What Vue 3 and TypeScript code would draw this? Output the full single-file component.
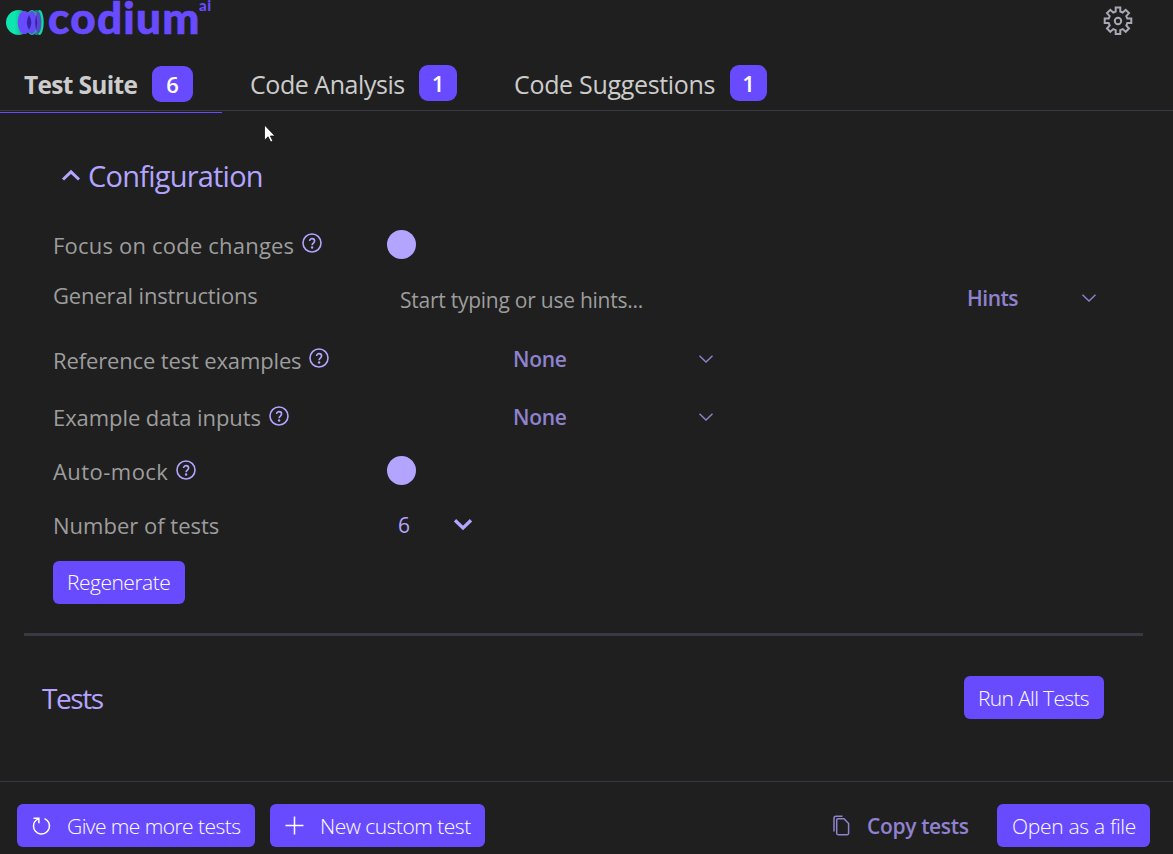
<script setup lang="ts">
import { ref } from 'vue'

interface Tab {
  id: string
  label: string
  count: number
}

const tabs: Tab[] = [
  { id: 'suite', label: 'Test Suite', count: 6 },
  { id: 'analysis', label: 'Code Analysis', count: 1 },
  { id: 'suggestions', label: 'Code Suggestions', count: 1 },
]
const active = ref('suite')
const testCount = ref(6)
const help =
  'M10 1a9 9 0 1 0 0 18a9 9 0 0 0 0-18M7.6 8.1c0-3.3 5-3.2 5 0c0 1.900-2.500 2-2.500 4.100'
</script>

<template>
  <div class="app">
    <header class="top">
      <div class="brand">
        <svg class="mark" width="40" height="28" viewBox="0 0 40 28">
          <defs>
            <linearGradient id="fade">
              <stop offset="0.35" stop-color="#0ee6b0" />
              <stop offset="1" stop-color="#22776f" />
            </linearGradient>
          </defs>
          <ellipse cx="33.500" cy="14.500" rx="4.200" ry="12.500" fill="#12d6ad" />
          <ellipse cx="30.500" cy="14.500" rx="5" ry="12.500" fill="#277f86" />
          <ellipse cx="26" cy="14.500" rx="6.500" ry="12.500" fill="#1cb3a0" />
          <circle cx="12.500" cy="14.500" r="12.500" fill="url(#fade)" />
          <ellipse cx="32.200" cy="14.500" rx="2.700" ry="10.500" fill="#5947d0" />
          <ellipse cx="25.800" cy="14.500" rx="5" ry="11.500" fill="#6549f2" />
          <ellipse cx="18.500" cy="14.500" rx="6.800" ry="11.500" fill="#694bff" />
          <path d="M23 7q4.600 7.500 0 15q-4.200-7.500 0-15M30.300 7q1.600 7.500 0 15q-2.200-7.500 0-15" fill="#3521a8" />
        </svg>
        <span class="word">codium</span>
        <span class="ai">ai</span>
      </div>
      <svg class="gear" width="30" height="30" viewBox="0 0 30 30">
        <path d="M12.700 5.500V1.500h4.600v4l2.400 1l3-2.700l3.300 3.300l-2.700 3l1 2.400h4v4.600h-4l-1 2.400l2.700 3l-3.300 3.300l-3-2.700l-2.400 1v4h-4.600v-4l-2.400-1l-3 2.700l-3.300-3.300l2.700-3l-1-2.400h-4v-4.600h4l1-2.400l-2.700-3l3.300-3.300l3 2.700z" />
        <circle cx="15" cy="15" r="3.200" />
      </svg>
    </header>

    <nav class="tabs">
      <button
        v-for="tab in tabs"
        :key="tab.id"
        :class="['tab', tab.id, { active: active === tab.id }]"
        @click="active = tab.id"
      >
        <span class="tab-label">{{ tab.label }}</span>
        <span class="badge">{{ tab.count }}</span>
      </button>
    </nav>

    <main class="content">
      <h2 class="config-title">
        <svg width="20" height="14" viewBox="0 0 20 14"><path class="bold" d="M2 11.500L10 3.800l8 7.700" /></svg>
        <span>Configuration</span>
      </h2>

      <div class="row r-focus">
        <div class="label">
          <span class="t-focus">Focus on code changes</span>
          <svg class="help" width="20" height="20" viewBox="0 0 20 20"><path :d="help" /><circle class="dot" cx="10.100" cy="14.500" r="1.200" /></svg>
        </div>
        <span class="knob"></span>
      </div>

      <div class="row r-general">
        <div class="label"><span class="t-general">General instructions</span></div>
        <div class="prompt">Start typing or use hints...</div>
        <div class="select hints">
          <span>Hints</span>
          <svg width="16" height="10" viewBox="0 0 16 10"><path class="thin" d="M1.500 1.800L8 8l6.500-6.200" /></svg>
        </div>
      </div>

      <div class="row r-ref">
        <div class="label">
          <span class="t-ref">Reference test examples</span>
          <svg class="help" width="20" height="20" viewBox="0 0 20 20"><path :d="help" /><circle class="dot" cx="10.100" cy="14.500" r="1.200" /></svg>
        </div>
        <div class="select none">
          <span>None</span>
          <svg width="16" height="10" viewBox="0 0 16 10"><path class="thin" d="M1.500 1.800L8 8l6.500-6.200" /></svg>
        </div>
      </div>

      <div class="row r-data">
        <div class="label">
          <span class="t-data">Example data inputs</span>
          <svg class="help" width="20" height="20" viewBox="0 0 20 20"><path :d="help" /><circle class="dot" cx="10.100" cy="14.500" r="1.200" /></svg>
        </div>
        <div class="select none">
          <span>None</span>
          <svg width="16" height="10" viewBox="0 0 16 10"><path class="thin" d="M1.500 1.800L8 8l6.500-6.200" /></svg>
        </div>
      </div>

      <div class="row r-mock">
        <div class="label">
          <span class="t-mock">Auto-mock</span>
          <svg class="help" width="20" height="20" viewBox="0 0 20 20"><path :d="help" /><circle class="dot" cx="10.100" cy="14.500" r="1.200" /></svg>
        </div>
        <span class="knob"></span>
      </div>

      <div class="row r-count">
        <div class="label"><span class="t-count">Number of tests</span></div>
        <div class="number">
          <span>{{ testCount }}</span>
          <svg width="20" height="14" viewBox="0 0 20 14"><path class="bolder" d="M2 2.300l8 7.700l8-7.700" /></svg>
        </div>
      </div>

      <button class="btn regen"><span>Regenerate</span></button>

      <hr class="rule" />

      <section class="tests">
        <h2>Tests</h2>
        <button class="btn run"><span>Run All Tests</span></button>
      </section>
    </main>

    <footer class="bottom">
      <button class="btn more">
        <svg width="20" height="20" viewBox="0 0 20 20"><path d="M2.500 2.300h5.400v5M7.700 2.600C4.300 4 2.500 6.800 2.500 10a8 8 0 1 0 11-7.400" /></svg>
        <span>Give me more tests</span>
      </button>
      <button class="btn custom">
        <svg width="20" height="20" viewBox="0 0 20 20"><path d="M10.500 .5v18M1.500 9.500h18" /></svg>
        <span>New custom test</span>
      </button>
      <button class="copy">
        <svg width="18" height="21" viewBox="0 0 18 21"><path d="M2 16.500V3.200q0-2 2-2H10.500M4.700 5q0-1.200 1.200-1.200h6.100l4.600 4.800v9.700q0 1.400-1.400 1.400H6.100q-1.400 0-1.400-1.400z" /></svg>
        <span>Copy tests</span>
      </button>
      <button class="btn open"><span>Open as a file</span></button>
    </footer>

    <svg class="cursor" width="14" height="20" viewBox="0 0 14 20">
      <path d="M1.500 1v15.200l3.600-3.400l2.600 5.300l2.200-1l-2.500-5.100h4.600z" />
    </svg>
  </div>
</template>

<style>
body {
  background: #1f1f1f;
}
</style>

<style scoped>
.app {
  position: relative;
  box-sizing: border-box;
  width: 1173px;
  height: 854px;
  overflow: hidden;
  display: flex;
  flex-direction: column;
  background: #1f1f1f;
  color: #9d9d9d;
  font-family: 'Open Sans', 'Noto Sans', sans-serif;
  font-size: 22px;
}
svg {
  display: block;
  flex: none;
  fill: none;
}
button {
  font: inherit;
  color: inherit;
  border: 0;
  background: none;
  padding: 0;
  white-space: nowrap;
}
.top {
  height: 56px;
  flex: none;
  display: flex;
  justify-content: space-between;
  padding: 0 40px 0 6px;
}
.brand {
  display: flex;
  color: #694bff;
  white-space: nowrap;
}
.mark {
  margin-top: 8px;
}
.word {
  font: 900 44px/35px Lato, sans-serif;
  letter-spacing: 1.300px;
  -webkit-text-stroke: 0.700px #694bff;
  width: 152px;
  margin-left: 2px;
}
.ai {
  font: 900 15px/10px Lato, sans-serif;
  letter-spacing: 0.500px;
  margin-left: -1px;
}
.gear {
  margin-top: 6px;
  stroke: #a9a7b3;
  stroke-width: 2;
}
.tabs {
  height: 54px;
  flex: none;
  display: flex;
  border-bottom: 1px solid #3a3843;
  color: #cccccc;
  font-size: 25px;
}
.tab {
  height: 57px;
  box-sizing: border-box;
  display: flex;
  align-items: flex-start;
  padding-top: 9px;
}
.tab-label {
  line-height: 38px;
  text-align: left;
}
.suite {
  width: 222px;
  padding-left: 24px;
  padding-top: 10px;
}
.suite.active {
  border-bottom: 1px solid #694bff;
  font-weight: 700;
}
.suite .tab-label {
  width: 128px;
  font-size: 24.500px;
  letter-spacing: -0.680px;
}
.analysis {
  padding-left: 28px;
}
.analysis .tab-label {
  width: 169px;
  letter-spacing: -0.450px;
}
.analysis .badge {
  width: 38px;
}
.suggestions {
  padding-left: 57px;
}
.suggestions .tab-label {
  width: 216px;
  letter-spacing: -0.320px;
}
.badge {
  width: 37px;
  height: 36px;
  border-radius: 9px;
  background: #694bff;
  color: #fff;
  font-size: 22px;
  font-weight: 600;
  line-height: 36px;
  text-align: center;
}
.suite .badge {
  width: 41px;
}
.content {
  flex: 1;
  padding: 46px 30px 0 24px;
}
.config-title {
  margin: 0 0 0 37px;
  height: 62px;
  display: flex;
  gap: 7px;
  color: #b3a5ff;
  font-size: 29px;
  font-weight: 400;
  line-height: 38px;
  letter-spacing: -0.780px;
}
.config-title svg {
  margin-top: 11px;
}
.bold,
.bolder {
  stroke: #b3a5ff;
  stroke-width: 3;
}
.bolder {
  stroke-width: 3.300;
}
.thin {
  stroke: #8f82cf;
  stroke-width: 1.400;
}
.row {
  display: flex;
  align-items: center;
  padding-left: 29px;
  white-space: nowrap;
}
.r-focus { height: 52px; }
.r-general { height: 54px; }
.r-ref { height: 70px; }
.r-data { height: 45px; }
.r-mock { height: 62px; }
.r-count { height: 46px; }
.t-focus { letter-spacing: 0.200px; }
.t-general { letter-spacing: -0.150px; margin-bottom: 6px; }
.t-ref { letter-spacing: -0.140px; }
.t-data { letter-spacing: -0.070px; margin-top: -1px; }
.t-mock { letter-spacing: 0.450px; }
.label {
  width: 334px;
  display: flex;
  gap: 8px;
  line-height: 30px;
}
.help {
  margin-top: 3px;
  stroke: #b3a5ff;
  stroke-width: 1.600;
}
.r-mock .help {
  margin-top: 4px;
}
.help .dot {
  fill: #b3a5ff;
  stroke: none;
}
.knob {
  width: 29px;
  height: 29px;
  margin-bottom: 2px;
  border-radius: 50%;
  background: #b3a5ff;
}
.prompt {
  width: 580px;
  box-sizing: border-box;
  padding: 4px 0 0 13px;
  font-size: 21px;
  letter-spacing: -0.250px;
}
.select {
  display: flex;
  align-items: center;
  justify-content: space-between;
  color: #8f82cf;
  font-size: 21px;
  font-weight: 600;
  line-height: 30px;
}
.hints {
  width: 130px;
  letter-spacing: -0.500px;
}
.none {
  width: 201px;
  margin: 0 0 2px 126px;
  letter-spacing: -0.250px;
}
.number {
  width: 75px;
  padding-left: 11px;
  display: flex;
  align-items: center;
  justify-content: space-between;
  color: #b3a5ff;
  font-size: 21px;
}
.btn {
  height: 43px;
  box-sizing: border-box;
  display: flex;
  align-items: center;
  padding: 0 14px;
  border-radius: 6px;
  background: #694bff;
  color: #fff;
  font-size: 21px;
  font-weight: 300;
}
.regen {
  width: 132px;
  margin: 13px 0 0 29px;
  padding-bottom: 2px;
  letter-spacing: -0.500px;
}
.rule {
  height: 3px;
  margin: 29px 0 0;
  border: 0;
  background: #3a3843;
  width: 1119px;
}
.tests {
  display: flex;
  justify-content: space-between;
  align-items: center;
  padding: 40px 39px 0 18px;
}
.tests h2 {
  margin: 0;
  color: #b3a5ff;
  font-size: 28px;
  font-weight: 400;
  letter-spacing: -1.450px;
}
.run {
  width: 140px;
  letter-spacing: -0.650px;
}
.bottom {
  height: 73px;
  box-sizing: border-box;
  flex: none;
  display: flex;
  align-items: flex-start;
  padding: 22px 23px 0 17px;
  border-top: 1px solid #3a3843;
}
.bottom svg {
  stroke: currentColor;
  stroke-width: 1.500;
}
.more {
  width: 238px;
  gap: 16px;
  letter-spacing: -0.550px;
}
.custom {
  width: 215px;
  margin-left: 15px;
  gap: 16px;
  letter-spacing: -0.500px;
}
.copy {
  height: 43px;
  margin: 0 28px 0 auto;
  width: 137px;
  display: flex;
  align-items: center;
  gap: 17px;
  color: #8f82cf;
  font-size: 21px;
  font-weight: 600;
  letter-spacing: -0.350px;
}
.open {
  width: 153px;
  padding-left: 15px;
  letter-spacing: -0.300px;
}
.cursor {
  position: absolute;
  left: 263px;
  top: 124px;
}
.cursor path {
  fill: #fff;
  stroke: #111;
  stroke-width: 0.800;
}
</style>
